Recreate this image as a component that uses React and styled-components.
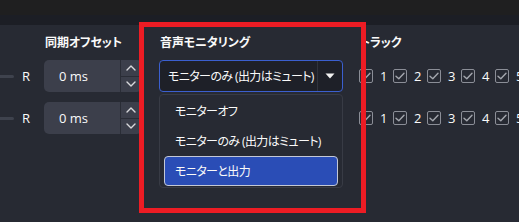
import React from "react";
import styled, { createGlobalStyle } from "styled-components";

const Global = createGlobalStyle`
  html, body { margin: 0; padding: 0; }
  body {
    background: #272a33;
    width: 519px;
    height: 222px;
    overflow: hidden;
    font-family: "Open Sans", "Noto Sans CJK JP", sans-serif;
    font-size: 13px;
    color: #fafafa;
    font-feature-settings: "palt";
  }
`;

const Page = styled.div`
  position: relative;
  width: 519px;
  height: 222px;
  display: flex;
  flex-direction: column;
  overflow: hidden;
`;

const TitleBar = styled.div`
  height: 15px;
  background: #1f1f20;
`;

const Strip = styled.div`
  height: 10px;
  background: #1c1e25;
`;

const Content = styled.div`
  flex: 1;
  display: flex;
  align-items: flex-start;
`;

const Column = styled.div`
  display: flex;
  flex-direction: column;
  width: ${(p) => p.$w}px;
  margin-left: ${(p) => p.$ml || 0}px;
  flex-shrink: 0;
`;

const Header = styled.div`
  height: 35px;
  line-height: 35px;
  padding-left: ${(p) => p.$pl || 0}px;
  font-weight: 700;
  font-size: 12px;
  letter-spacing: -0.1px;
  white-space: nowrap;
`;

const Rows = styled.div`
  display: flex;
  flex-direction: column;
  gap: 10px;
`;

const Row = styled.div`
  height: 32px;
  display: flex;
  align-items: center;
`;

const SliderTrack = styled.div`
  width: 14px;
  height: 3px;
  background: #3e424d;
  border-radius: 0 2px 2px 0;
`;

const ChannelLabel = styled.span`
  margin-left: 8px;
  font-size: 13px;
`;

const Spin = styled.div`
  width: 98px;
  height: 32px;
  background: #3c3f4b;
  border-radius: 5px;
  display: flex;
  overflow: hidden;
`;

const SpinValue = styled.div`
  flex: 1;
  padding-left: 15px;
  display: flex;
  align-items: center;
  border-right: 1px solid #2a2d36;
`;

const SpinButtons = styled.div`
  width: 21px;
  display: flex;
  flex-direction: column;
`;

const SpinButton = styled.div`
  flex: 1;
  display: flex;
  align-items: center;
  justify-content: center;
  padding-right: 2px;
  border-top: ${(p) => (p.$bottom ? "1px solid #2a2d36" : "none")};
`;

const Chevron = ({ up }) => (
  <svg width="10" height="6" viewBox="0 0 10 6">
    <path
      d={up ? "M1 5 L5 1 L9 5" : "M1 1 L5 5 L9 1"}
      fill="none"
      stroke="#d8d9dc"
      strokeWidth="1.4"
      strokeLinecap="round"
      strokeLinejoin="round"
    />
  </svg>
);

const ComboWrap = styled.div`
  position: relative;
`;

const Combo = styled.div`
  width: 184px;
  height: 32px;
  box-sizing: border-box;
  border: 1px solid #3b5fcf;
  border-radius: 4px;
  background: #1e2028;
  display: flex;
`;

const ComboText = styled.div`
  flex: 1;
  min-width: 0;
  overflow: hidden;
  padding-left: 8px;
  display: flex;
  align-items: center;
  white-space: nowrap;
  font-size: 12px;
  letter-spacing: -0.6px;
`;

const ComboArrow = styled.div`
  width: 23px;
  flex-shrink: 0;
  border-left: 1px solid #30333c;
  display: flex;
  align-items: center;
  justify-content: center;
  padding-right: 1px;
`;

const Popup = styled.div`
  position: absolute;
  left: 0;
  top: 34px;
  width: 184px;
  box-sizing: border-box;
  border: 1px solid #383b45;
  border-radius: 4px;
  background: #272a33;
  padding: 1px 4px 1px 4px;
  display: flex;
  flex-direction: column;
  z-index: 2;
`;

const Item = styled.div`
  height: 30px;
  box-sizing: border-box;
  padding-left: ${(p) => (p.$selected ? 10 : 11)}px;
  display: flex;
  align-items: center;
  white-space: nowrap;
  font-size: 12px;
  letter-spacing: -0.6px;
  border-radius: 4px;
  background: ${(p) => (p.$selected ? "#2a4db6" : "transparent")};
  border: ${(p) => (p.$selected ? "1px solid #c3c8d6" : "none")};
`;

const Tracks = styled.div`
  display: flex;
  align-items: center;
`;

const Track = styled.div`
  display: flex;
  align-items: center;
  margin-right: 6px;
`;

const Box = styled.div`
  width: 14px;
  height: 14px;
  box-sizing: border-box;
  border: 1px solid #8b8e97;
  border-radius: 2px;
  display: flex;
  align-items: center;
  justify-content: center;
`;

const TrackNum = styled.span`
  margin-left: 7px;
  width: 7px;
  font-size: 13px;
`;

const Check = () => (
  <svg width="10" height="8" viewBox="0 0 10 8">
    <path
      d="M1 4.2 L3.8 6.8 L9 1.2"
      fill="none"
      stroke="#a3a6ad"
      strokeWidth="1.4"
      strokeLinecap="round"
      strokeLinejoin="round"
    />
  </svg>
);

const Highlight = styled.div`
  position: absolute;
  left: 139px;
  top: 22px;
  width: 227px;
  height: 191px;
  box-sizing: border-box;
  border: 5px solid #ed1c24;
  z-index: 3;
  pointer-events: none;
`;

const TrackRow = () => (
  <Tracks>
    {[1, 2, 3, 4, 5].map((n) => (
      <Track key={n}>
        <Box>
          <Check />
        </Box>
        <TrackNum>{n}</TrackNum>
      </Track>
    ))}
  </Tracks>
);

const SpinBox = () => (
  <Spin>
    <SpinValue>0 ms</SpinValue>
    <SpinButtons>
      <SpinButton>
        <Chevron up />
      </SpinButton>
      <SpinButton $bottom>
        <Chevron />
      </SpinButton>
    </SpinButtons>
  </Spin>
);

export default function App() {
  return (
    <Page>
      <Global />
      <TitleBar />
      <Strip />
      <Content>
        <Column $w={44}>
          <Header />
          <Rows>
            <Row>
              <SliderTrack />
              <ChannelLabel>R</ChannelLabel>
            </Row>
            <Row>
              <SliderTrack />
              <ChannelLabel>R</ChannelLabel>
            </Row>
          </Rows>
        </Column>
        <Column $w={98}>
          <Header $pl={1}>同期オフセット</Header>
          <Rows>
            <Row>
              <SpinBox />
            </Row>
            <Row>
              <SpinBox />
            </Row>
          </Rows>
        </Column>
        <Column $w={184} $ml={17}>
          <Header $pl={1}>音声モニタリング</Header>
          <Rows>
            <Row>
              <ComboWrap>
                <Combo>
                  <ComboText>モニターのみ (出力はミュート)</ComboText>
                  <ComboArrow>
                    <svg width="10" height="6" viewBox="0 0 10 6">
                      <path d="M0.5 0.5 L9.5 0.5 L5 5.5 Z" fill="#f2f2f2" />
                    </svg>
                  </ComboArrow>
                </Combo>
                <Popup>
                  <Item>モニターオフ</Item>
                  <Item>モニターのみ (出力はミュート)</Item>
                  <Item $selected>モニターと出力</Item>
                </Popup>
              </ComboWrap>
            </Row>
            <Row />
          </Rows>
        </Column>
        <Column $w={200} $ml={16}>
          <Header $pl={1}>トラック</Header>
          <Rows>
            <Row>
              <TrackRow />
            </Row>
            <Row>
              <TrackRow />
            </Row>
          </Rows>
        </Column>
      </Content>
      <Highlight />
    </Page>
  );
}
